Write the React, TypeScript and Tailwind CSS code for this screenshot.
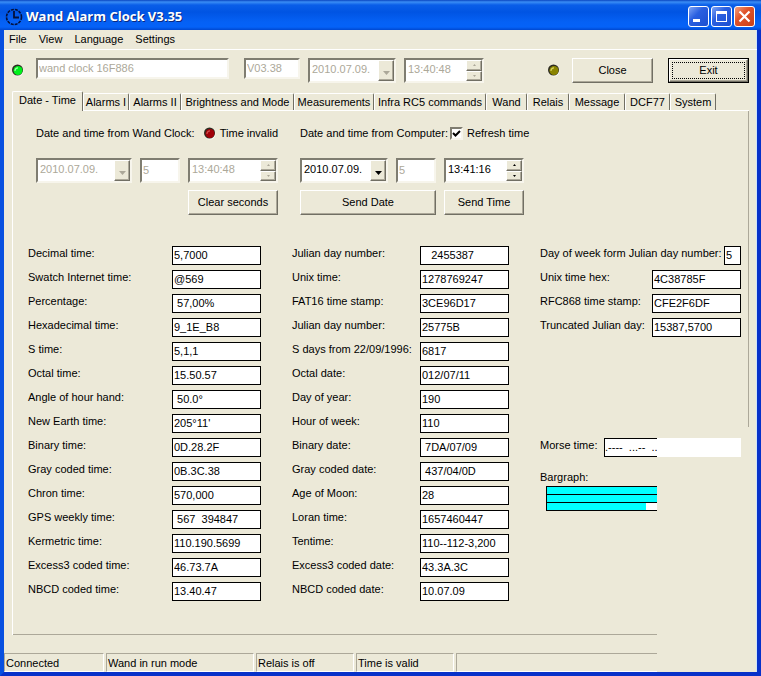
import type { ReactNode } from 'react'
import clsx from 'clsx'

const MENU = ['File', 'View', 'Language', 'Settings']

const TABS = [
  { label: 'Date - Time', width: 'w-[71px]' },
  { label: 'Alarms I', width: 'w-[46px]' },
  { label: 'Alarms II', width: 'w-[52px]' },
  { label: 'Brightness and Mode', width: 'w-[113px]' },
  { label: 'Measurements', width: 'w-[80px]' },
  { label: 'Infra RC5 commands', width: 'w-[112px]' },
  { label: 'Wand', width: 'w-[41px]' },
  { label: 'Relais', width: 'w-[42px]' },
  { label: 'Message', width: 'w-[56px]' },
  { label: 'DCF77', width: 'w-[45px]' },
  { label: 'System', width: 'w-[46px]' },
]

const TIMES = [
  ['Decimal time:', '5,7000'],
  ['Swatch Internet time:', '@569'],
  ['Percentage:', ' 57,00%'],
  ['Hexadecimal time:', '9_1E_B8'],
  ['S time:', '5,1,1'],
  ['Octal time:', '15.50.57'],
  ['Angle of hour hand:', ' 50.0°'],
  ['New Earth time:', "205°11'"],
  ['Binary time:', '0D.28.2F'],
  ['Gray coded time:', '0B.3C.38'],
  ['Chron time:', '570,000'],
  ['GPS weekly time:', ' 567  394847'],
  ['Kermetric time:', '110.190.5699'],
  ['Excess3 coded time:', '46.73.7A'],
  ['NBCD coded time:', '13.40.47'],
]

const DATES = [
  ['Julian day number:', '   2455387'],
  ['Unix time:', '1278769247'],
  ['FAT16 time stamp:', '3CE96D17'],
  ['Julian day number:', '25775B'],
  ['S days from 22/09/1996:', '6817'],
  ['Octal date:', '012/07/11'],
  ['Day of year:', '190'],
  ['Hour of week:', '110'],
  ['Binary date:', ' 7DA/07/09'],
  ['Gray coded date:', ' 437/04/0D'],
  ['Age of Moon:', '28'],
  ['Loran time:', '1657460447'],
  ['Tentime:', '110--112-3,200'],
  ['Excess3 coded date:', '43.3A.3C'],
  ['NBCD coded date:', '10.07.09'],
]

const OTHERS = [
  ['Day of week form Julian day number:', '5'],
  ['Unix time hex:', '4C38785F'],
  ['RFC868 time stamp:', 'CFE2F6DF'],
  ['Truncated Julian day:', '15387,5700'],
]

const BARS = [100, 100, 90]

const SUNKEN =
  'border-2 border-t-[#7f7d71] border-l-[#7f7d71] border-r-[#f7f5ec] border-b-[#f7f5ec] bg-white'
const RAISED =
  'border border-t-white border-l-white border-r-[#716f64] border-b-[#716f64] bg-[#ece9d8] shadow-[inset_-1px_-1px_0_#aca899]'

function Led({ color, light }: { color: string; light: string }) {
  return (
    <svg width="12" height="13" viewBox="0 0 12 13" className="shrink-0" aria-hidden="true">
      <circle cx="6" cy="7" r="5.5" fill="#fbfaf4" />
      <circle cx="5.5" cy="6" r="5.5" fill="#2d2b20" />
      <circle cx="6" cy="6.5" r="4.5" fill={color} />
      <path d="M3 7a3 3 0 0 1 3-3.2" stroke={light} strokeWidth="1.2" fill="none" />
    </svg>
  )
}

function Button({ children, focused }: { children: ReactNode; focused?: boolean }) {
  if (focused) {
    return (
      <button type="button" className="h-[25px] w-[81px] border border-black">
        <span className={clsx(RAISED, 'block h-full p-0.5')}>
          <span className="flex h-full items-center justify-center border border-dotted border-black">
            {children}
          </span>
        </span>
      </button>
    )
  }
  return (
    <button type="button" className={clsx(RAISED, 'h-[25px] w-full')}>
      {children}
    </button>
  )
}

function TextBox({ label, value, className }: { label: string; value: string; className?: string }) {
  return (
    <input
      aria-label={label}
      defaultValue={value}
      disabled
      className={clsx(SUNKEN, 'min-w-0 px-px pb-0.5 text-[#aca899]', className)}
    />
  )
}

function DateField({ label, value, disabled }: { label: string; value: string; disabled?: boolean }) {
  return (
    <div className={clsx(SUNKEN, 'relative h-[25px] w-full')}>
      <select
        aria-label={label}
        disabled={disabled}
        className={clsx(
          'block h-full w-full appearance-none pb-0.5 pl-0.5 opacity-100 outline-none',
          disabled ? 'text-[#aca899]' : 'text-black',
        )}
      >
        <option>{value}</option>
      </select>
      <span
        className={clsx(
          RAISED,
          'pointer-events-none absolute inset-y-0 right-0 flex w-4 items-center justify-center pt-1',
        )}
      >
        <svg width="7" height="4" viewBox="0 0 7 4" aria-hidden="true">
          <path d="M0 0h7L3.5 4z" fill={disabled ? '#aca899' : '#000'} />
        </svg>
      </span>
    </div>
  )
}

function Spin({ down, disabled }: { down?: boolean; disabled?: boolean }) {
  return (
    <button
      type="button"
      aria-label={down ? 'Down' : 'Up'}
      disabled={disabled}
      className={clsx(RAISED, 'flex min-h-0 flex-1 items-center justify-center')}
    >
      <svg width="3" height="2" viewBox="0 0 3 2" aria-hidden="true">
        <path d={down ? 'M0 0h3L1.5 2z' : 'M0 2h3L1.5 0z'} fill={disabled ? '#aca899' : '#000'} />
      </svg>
    </button>
  )
}

function TimeField({ label, value, disabled }: { label: string; value: string; disabled?: boolean }) {
  return (
    <div className={clsx(SUNKEN, 'flex h-[25px] w-full')}>
      <input
        aria-label={label}
        defaultValue={value}
        disabled={disabled}
        className={clsx(
          'min-w-0 flex-1 pb-0.5 pl-0.5 outline-none',
          disabled ? 'text-[#aca899]' : 'text-black',
        )}
      />
      <div className="flex w-4 flex-col">
        <Spin disabled={disabled} />
        <Spin down disabled={disabled} />
      </div>
    </div>
  )
}

function ValueRow({ label, value }: { label: string; value: string }) {
  return (
    <label className="flex h-[19px] justify-between whitespace-nowrap">
      <span className="leading-[14px]">{label}</span>
      <input
        readOnly
        value={value}
        className={clsx(
          'border border-black bg-white pl-px outline-none',
          value.length === 1 ? 'w-[17px]' : 'w-[89px]',
        )}
      />
    </label>
  )
}

function ValueColumn({ rows }: { rows: string[][] }) {
  return (
    <div className="flex flex-col gap-[5px]">
      {rows.map(([label, value], i) => (
        <ValueRow key={i} label={label} value={value} />
      ))}
    </div>
  )
}

function TitleBar() {
  return (
    <header className="flex h-[30px] items-center gap-0.5 bg-[linear-gradient(#0a46c0_0px,#3a8df5_2px,#0a5ee8_5px,#0054e3_12px,#0561f5_22px,#0562f8_27px,#0048d0_30px)] pt-[3px] pr-[6px] pl-[5px]">
      <svg width="18" height="18" viewBox="0 0 18 18" fill="none" aria-hidden="true">
        <circle cx="9" cy="9" r="7.5" stroke="#04103a" strokeWidth="1.6" strokeDasharray="3 1" />
        <path d="M9 3v6.5h5" stroke="#04103a" strokeWidth="1.8" />
      </svg>
      <h1 className="flex-1 pl-px font-['Open_Sans','Noto_Sans',sans-serif] text-[13px] font-bold text-white [text-shadow:1px_1px_0_#0a2a80]">
        Wand Alarm Clock V3.35
      </h1>
      <div className="flex gap-0.5">
        <button type="button" aria-label="Minimize" className="size-[21px] rounded-[3px] border border-white bg-[linear-gradient(135deg,#7fa5f5,#2a5fe0_40%,#1c4fd0)]">
          <svg viewBox="0 0 19 19" aria-hidden="true">
            <path d="M4 12h7v3H4z" fill="#fff" />
          </svg>
        </button>
        <button type="button" aria-label="Maximize" className="size-[21px] rounded-[3px] border border-white bg-[linear-gradient(135deg,#7fa5f5,#2a5fe0_40%,#1c4fd0)]">
          <svg viewBox="0 0 19 19" aria-hidden="true">
            <path d="M4 4h11v11H4zM5 7v7h9V7z" fill="#fff" fillRule="evenodd" />
          </svg>
        </button>
        <button type="button" aria-label="Close window" className="size-[21px] rounded-[3px] border border-white bg-[linear-gradient(135deg,#f0a080,#e0532a_40%,#c8401a)]">
          <svg viewBox="0 0 19 19" aria-hidden="true">
            <path d="M4.5 4.5l10 10M14.5 4.5l-10 10" stroke="#fff" strokeWidth="2.2" />
          </svg>
        </button>
      </div>
    </header>
  )
}

function Toolbar() {
  return (
    <div className="flex items-start px-2 pt-2 pb-2">
      <div className="flex h-[25px] w-6 items-center">
        <Led color="#00f01c" light="#a0ffa8" />
      </div>
      <TextBox label="Device" value="wand clock 16F886" className="mr-[15px] h-[21px] w-[193px]" />
      <TextBox label="Version" value="V03.38" className="mr-2 h-[21px] w-14" />
      <div className="mr-2 w-[88px]">
        <DateField label="Device date" value="2010.07.09." disabled />
      </div>
      <div className="w-20">
        <TimeField label="Device time" value="13:40:48" disabled />
      </div>
      <div className="ml-auto flex h-[25px] items-center">
        <Led color="#8a8400" light="#d8d460" />
        <div className="mr-[15px] ml-3 w-[81px]">
          <Button>Close</Button>
        </div>
        <Button focused>Exit</Button>
      </div>
    </div>
  )
}

function Tabs() {
  return (
    <div role="tablist" className="flex h-[19px] items-end pl-2">
      {TABS.map(({ label, width }, i) => (
        <button
          key={label}
          type="button"
          role="tab"
          aria-selected={i === 0}
          className={clsx(
            width,
            'rounded-t-[2px] border-t border-r border-l border-t-white border-r-[#716f64] border-l-white text-center whitespace-nowrap',
            i === 0 ? 'relative z-10 -mb-px h-5 bg-[#ece9d8] pb-0.5' : 'h-[17px]',
          )}
        >
          {label}
        </button>
      ))}
    </div>
  )
}

function ClockControls() {
  return (
    <div className="flex gap-[22px] pl-[23px] whitespace-nowrap">
      <div className="w-[242px]">
        <div className="mb-[17px] flex h-[15px] items-center">
          <span className="w-[169px]">Date and time from Wand Clock:</span>
          <Led color="#a00008" light="#d05050" />
          <span className="ml-1">Time invalid</span>
        </div>
        <div className="grid grid-cols-[96px_40px_90px] gap-x-2 gap-y-[7px]">
          <DateField label="Clock date" value="2010.07.09." disabled />
          <TextBox label="Clock weekday" value="5" className="h-[25px]" />
          <TimeField label="Clock time" value="13:40:48" disabled />
          <div className="col-start-3">
            <Button>Clear seconds</Button>
          </div>
        </div>
      </div>
      <div className="w-56">
        <div className="mb-[17px] flex h-[15px] items-center gap-0.5">
          <span>Date and time from Computer:</span>
          <label className="relative flex items-center gap-1">
            <input
              type="checkbox"
              defaultChecked
              className={clsx(SUNKEN, 'peer size-[13px] appearance-none')}
            />
            <svg width="13" height="13" viewBox="0 0 13 13" className="pointer-events-none absolute left-0 hidden peer-checked:block" aria-hidden="true">
              <path d="M3 6l2.5 2.5L10 4" stroke="#000" strokeWidth="2" fill="none" />
            </svg>
            Refresh time
          </label>
        </div>
        <div className="grid grid-cols-[88px_40px_80px] gap-x-2 gap-y-[7px]">
          <DateField label="Computer date" value="2010.07.09." />
          <TextBox label="Computer weekday" value="5" className="h-[25px]" />
          <TimeField label="Computer time" value="13:41:16" />
          <div className="col-span-2">
            <Button>Send Date</Button>
          </div>
          <Button>Send Time</Button>
        </div>
      </div>
    </div>
  )
}

function Panel() {
  return (
    <main className="relative mx-2 flex-1 border-t border-l border-white pt-[15px] pb-8">
      {/* the right and bottom edges stop short of the corner */}
      <span className="absolute top-0 right-0 h-[316px] w-px bg-[#aca899]" />
      <span className="absolute right-[92px] bottom-0 left-0 h-px bg-[#aca899]" />

      <ClockControls />

      <div className="mt-[31px] grid grid-cols-[233fr_217fr_201fr] gap-x-[31px] pr-2 pl-[15px]">
        <ValueColumn rows={TIMES} />
        <ValueColumn rows={DATES} />
        <div>
          <ValueColumn rows={OTHERS} />
          <label className="mt-[101px] flex h-[19px] justify-between whitespace-nowrap">
            <span className="leading-[14px]">Morse time:</span>
            <span className="flex w-[137px] bg-white">
              <input
                readOnly
                value=".----  ...--  .."
                className="w-[53px] border-y border-l border-black outline-none"
              />
            </span>
          </label>
          <p className="mt-[13px] leading-[14px]">Bargraph:</p>
          <div className="mt-0.5 ml-[6px] w-[111px] border-t border-l border-black">
            {BARS.map((percent, i) => (
              <div key={i} className="h-2 border-b border-black bg-white">
                <div className="h-full bg-[#00ffff]" style={{ width: `${percent}%` }} />
              </div>
            ))}
          </div>
        </div>
      </div>
    </main>
  )
}

function StatusBar() {
  const cell = 'border border-t-[#aca899] border-l-[#aca899] border-r-white border-b-white pl-px leading-[18px]'
  return (
    <footer className="mt-[18px] mr-[100px] flex h-[19px] gap-0.5">
      <span className={clsx(cell, 'w-[100px]')}>Connected</span>
      <span className={clsx(cell, 'w-[148px]')}>Wand in run mode</span>
      <span className={clsx(cell, 'w-[98px]')}>Relais is off</span>
      <span className={clsx(cell, 'w-[98px]')}>Time is valid</span>
      <span className={clsx(cell, 'flex-1 border-r-0')} />
    </footer>
  )
}

export default function App() {
  return (
    <div className="flex min-h-screen flex-col bg-[#ece9d8] font-['Liberation_Sans',Arial,sans-serif] text-[11px] text-black">
      <TitleBar />
      <div className="flex flex-1 flex-col border-r-4 border-b-4 border-l-4 border-r-[#0831c9] border-b-[#0831c9] border-l-[#0850e0] shadow-[inset_-1px_0_0_#cfe4fa]">
        <nav className="flex h-5 items-center gap-3 border-b border-white pl-[5px]">
          {MENU.map((item) => (
            <button key={item} type="button">
              {item}
            </button>
          ))}
        </nav>
        <Toolbar />
        <Tabs />
        <Panel />
        <StatusBar />
      </div>
    </div>
  )
}
